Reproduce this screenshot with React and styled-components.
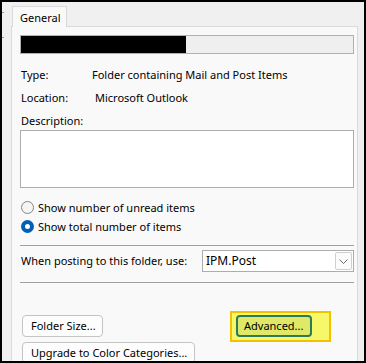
import React from "react";
import styled, { createGlobalStyle } from "styled-components";

const Global = createGlobalStyle`
  html, body { margin: 0; padding: 0; background: #000; }
  * { box-sizing: border-box; }
`;

const Frame = styled.div`
  width: 366px;
  height: 363px;
  border-style: solid;
  border-color: #000;
  border-width: 2px 2px 2px 2px;
  background: #f0f0f0;
  display: flex;
  overflow: hidden;
  font-family: "Noto Sans", "Open Sans", sans-serif;
  font-size: 11px;
  line-height: 16px;
  color: #000;
`;

const LeftStrip = styled.div`
  width: 9px;
  flex: none;
  display: flex;
  flex-direction: column;
`;

const Tick = styled.div`
  width: 2px;
  height: 1px;
  background: #9a9a9a;
  margin-top: ${(p) => p.$top}px;
`;

const Main = styled.div`
  flex: 1;
  display: flex;
  flex-direction: column;
  padding-right: 6px;
  min-width: 0;
`;

const TabStrip = styled.div`
  height: 24px;
  flex: none;
  display: flex;
  align-items: flex-end;
  padding-left: 1px;
  position: relative;
  z-index: 1;
`;

const Tab = styled.div`
  width: 55px;
  height: 21px;
  margin-bottom: -1px;
  border: 1px solid #d9d9d9;
  border-bottom: none;
  background: #f9f9f9;
  padding: 3px 0 0 7px;
`;

const Panel = styled.div`
  flex: 1;
  min-height: 0;
  overflow: hidden;
  border: 1px solid #dadada;
  border-bottom: none;
  background: #f9f9f9;
  padding: 8px 3px 0 8px;
  display: flex;
  flex-direction: column;
`;

const Progress = styled.div`
  height: 19px;
  flex: none;
  border: 1px solid #b0b0b0;
  background: #efefef;
  display: flex;
`;

const ProgressFill = styled.div`
  height: 100%;
  background: #000;
`;

const InfoRow = styled.div`
  display: flex;
  flex: none;
  padding-left: 1px;
  margin-top: ${(p) => p.$mt}px;
`;

const InfoLabel = styled.span`
  width: ${(p) => p.$w}px;
  flex: none;
`;

const TextBox = styled.div`
  height: 58px;
  flex: none;
  margin-top: 1px;
  border: 1px solid #adadad;
  background: #fff;
`;

const RadioRow = styled.label`
  display: flex;
  flex: none;
  align-items: center;
  height: 19px;
  gap: 4px;
  padding-left: 1px;
  margin-top: ${(p) => p.$mt || 0}px;
`;

const RadioDot = styled.span`
  width: 13px;
  height: 13px;
  border-radius: 50%;
  flex: none;
  background: #f5f5f5;
  border: 1px solid #858585;
`;

const CheckedDot = styled.span`
  width: 13px;
  height: 13px;
  border-radius: 50%;
  background: #005fb8;
  flex: none;
  display: flex;
  align-items: center;
  justify-content: center;
  &::after {
    content: "";
    width: 5px;
    height: 5px;
    border-radius: 50%;
    background: #fff;
  }
`;

const Separator = styled.div`
  height: 1px;
  flex: none;
  background: #a0a0a0;
  margin-top: ${(p) => p.$mt}px;
`;

const PostRow = styled.div`
  display: flex;
  flex: none;
  align-items: center;
  justify-content: space-between;
  margin-top: 4px;
  padding-left: 1px;
`;

const Select = styled.div`
  width: 152px;
  height: 22px;
  flex: none;
  border: 1px solid #adadad;
  background: #fff;
  display: flex;
  align-items: center;
  padding: 0 1px 0 3px;
  font-size: 12px;
`;

const SelectText = styled.span`
  flex: 1;
`;

const DropButton = styled.div`
  width: 17px;
  height: 18px;
  border: 1px solid #cfcfcf;
  border-radius: 2px;
  background: #fbfbfb;
  display: flex;
  align-items: center;
  justify-content: center;
`;

const ButtonRow = styled.div`
  display: flex;
  flex: none;
  align-items: center;
  margin-top: 32px;
  padding-left: 2px;
`;

const Button = styled.div`
  height: 22px;
  width: ${(p) => p.$w}px;
  border: 1px solid #c4c4c4;
  border-radius: 4px;
  background: #fdfdfd;
  display: flex;
  align-items: center;
  padding-left: 8px;
  white-space: nowrap;
  flex: none;
`;

const Highlight = styled.div`
  margin: -4px 0 -5px 127px;
  padding: 2px 17px 3px 4px;
  border: 2px solid #f2c200;
  background: #f7f76a;
`;

const AdvancedButton = styled.div`
  width: 76px;
  height: 22px;
  border: 2px solid #2b7a5c;
  border-radius: 4px;
  background: #dfe967;
  display: flex;
  align-items: center;
  padding-left: 6px;
  white-space: nowrap;
`;

const UpgradeButton = styled(Button)`
  margin: 5px 0 0 2px;
`;

export default function App() {
  return (
    <>
      <Global />
      <Frame>
        <LeftStrip>
          <Tick $top={10} />
          <Tick $top={24} />
        </LeftStrip>
        <Main>
          <TabStrip>
            <Tab>General</Tab>
          </TabStrip>
          <Panel>
            <Progress>
              <ProgressFill style={{ width: "165px" }} />
            </Progress>
            <InfoRow $mt={13}>
              <InfoLabel $w={71}>Type:</InfoLabel>
              <span>Folder containing Mail and Post Items</span>
            </InfoRow>
            <InfoRow $mt={7}>
              <InfoLabel $w={74}>Location:</InfoLabel>
              <span>Microsoft Outlook</span>
            </InfoRow>
            <InfoRow $mt={7}>
              <span>Description:</span>
            </InfoRow>
            <TextBox />
            <RadioRow $mt={10}>
              <RadioDot />
              <span>Show number of unread items</span>
            </RadioRow>
            <RadioRow>
              <CheckedDot />
              <span>Show total number of items</span>
            </RadioRow>
            <Separator $mt={9} />
            <PostRow>
              <span>When posting to this folder, use:</span>
              <Select>
                <SelectText>IPM.Post</SelectText>
                <DropButton>
                  <svg width="9" height="5" viewBox="0 0 9 5">
                    <path d="M0.5 0.5 L4.5 4.5 L8.5 0.5" fill="none" stroke="#6b6b6b" strokeWidth="1" />
                  </svg>
                </DropButton>
              </Select>
            </PostRow>
            <Separator $mt={10} />
            <ButtonRow>
              <Button $w={81}>Folder Size...</Button>
              <Highlight>
                <AdvancedButton>Advanced...</AdvancedButton>
              </Highlight>
            </ButtonRow>
            <UpgradeButton $w={173}>Upgrade to Color Categories...</UpgradeButton>
          </Panel>
        </Main>
      </Frame>
    </>
  );
}
